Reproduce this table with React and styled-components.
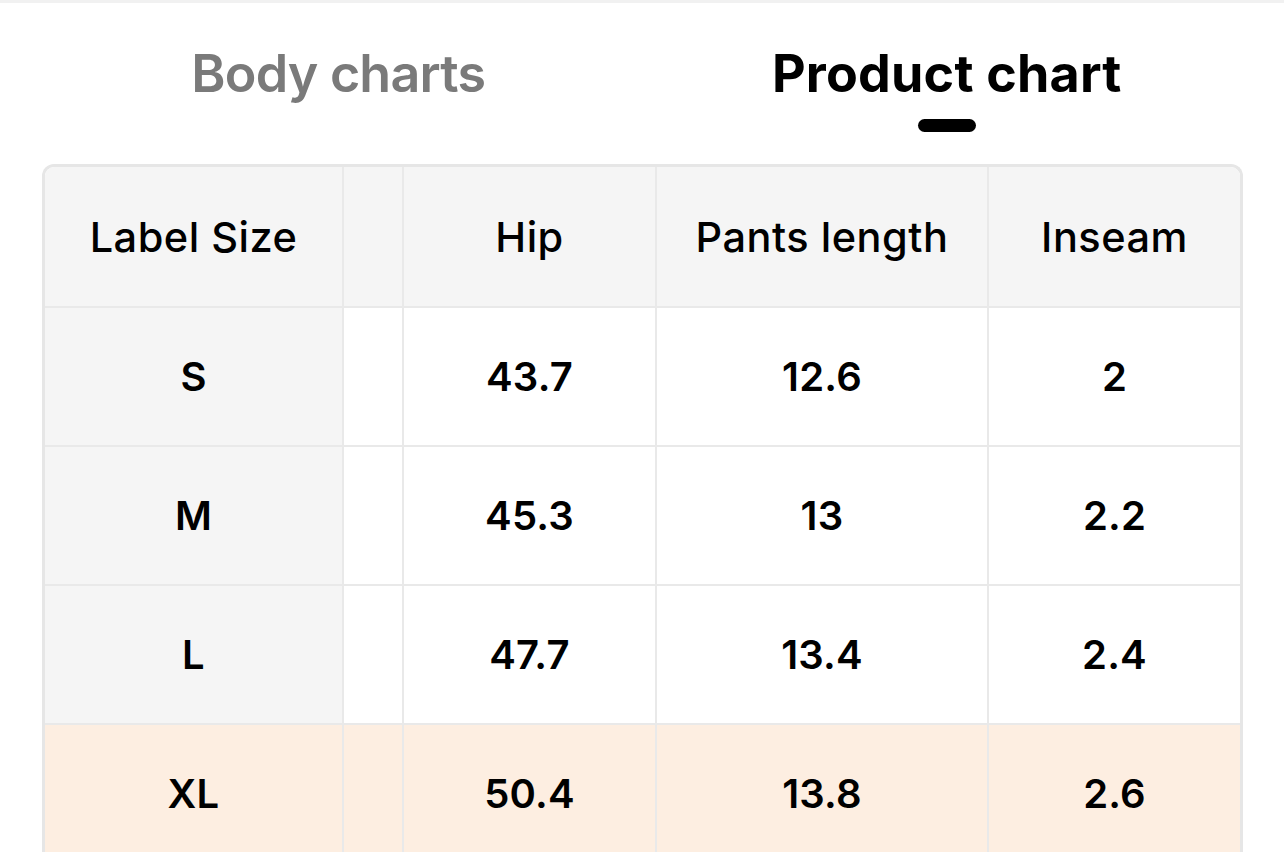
import styled, { createGlobalStyle } from "styled-components";

const GlobalStyle = createGlobalStyle`
  html, body {
    margin: 0;
    padding: 0;
    background: #fff;
    overflow: hidden;
  }
  body {
    font-family: Inter, "Liberation Sans", sans-serif;
    color: #000;
  }
`;

const Page = styled.div`
  width: 1284px;
  height: 852px;
  border-top: 3px solid #f1f1f1;
  box-sizing: border-box;
  overflow: hidden;
`;

const Tabs = styled.div`
  display: grid;
  grid-template-columns: 1fr 1fr;
  column-gap: 16px;
  width: 1201px;
  margin: 45px 0 0 42px;
`;

const Tab = styled.div`
  display: flex;
  flex-direction: column;
  align-items: center;
  font-size: 52px;
  line-height: 52px;
  font-weight: ${(p) => (p.$active ? 700 : 600)};
  color: ${(p) => (p.$active ? "#000" : "#7a7a7a")};
  letter-spacing: ${(p) => (p.$active ? "0.2px" : "-0.8px")};
`;

const Indicator = styled.div`
  width: 58px;
  height: 13px;
  margin-top: 19px;
  border-radius: 7px;
  background: ${(p) => (p.$show ? "#000" : "transparent")};
`;

const Table = styled.div`
  display: grid;
  grid-template-columns: 299px 60px 253px 332px 251px;
  grid-template-rows: 141px repeat(4, 139px);
  width: 1201px;
  margin: 32px 0 0 42px;
  box-sizing: border-box;
  border: 3px solid #e6e6e6;
  border-bottom: none;
  border-radius: 12px 12px 0 0;
  overflow: hidden;
`;

const Cell = styled.div`
  display: flex;
  align-items: center;
  justify-content: center;
  border-right: ${(p) => (p.$last ? "none" : "2px solid #e9e9e9")};
  border-bottom: 2px solid #e9e9e9;
  background: ${(p) => p.$bg || "#fff"};
  font-size: ${(p) => (p.$head ? "41.5px" : "40px")};
  font-weight: ${(p) => (p.$head ? 500 : 600)};
  letter-spacing: ${(p) => (p.$head ? "0.5px" : "0.2px")};
`;

const headers = ["Label Size", "", "Hip", "Pants length", "Inseam"];

const rows = [
  { size: "S", hip: "43.7", length: "12.6", inseam: "2" },
  { size: "M", hip: "45.3", length: "13", inseam: "2.2" },
  { size: "L", hip: "47.7", length: "13.4", inseam: "2.4" },
  { size: "XL", hip: "50.4", length: "13.8", inseam: "2.6", highlight: true },
];

export default function App() {
  return (
    <>
      <GlobalStyle />
      <Page>
        <Tabs>
          <Tab>
            Body charts
            <Indicator />
          </Tab>
          <Tab $active>
            Product chart
            <Indicator $show />
          </Tab>
        </Tabs>
        <Table>
          {headers.map((h, i) => (
            <Cell key={i} $head $bg="#f5f5f5" $last={i === 4}>
              {h}
            </Cell>
          ))}
          {rows.map((r) => {
            const bg = r.highlight ? "#fdeee1" : null;
            return [
              <Cell key={r.size + "s"} $bg={bg || "#f5f5f5"}>{r.size}</Cell>,
              <Cell key={r.size + "g"} $bg={bg} />,
              <Cell key={r.size + "h"} $bg={bg}>{r.hip}</Cell>,
              <Cell key={r.size + "p"} $bg={bg}>{r.length}</Cell>,
              <Cell key={r.size + "i"} $bg={bg} $last>{r.inseam}</Cell>,
            ];
          })}
        </Table>
      </Page>
    </>
  );
}
